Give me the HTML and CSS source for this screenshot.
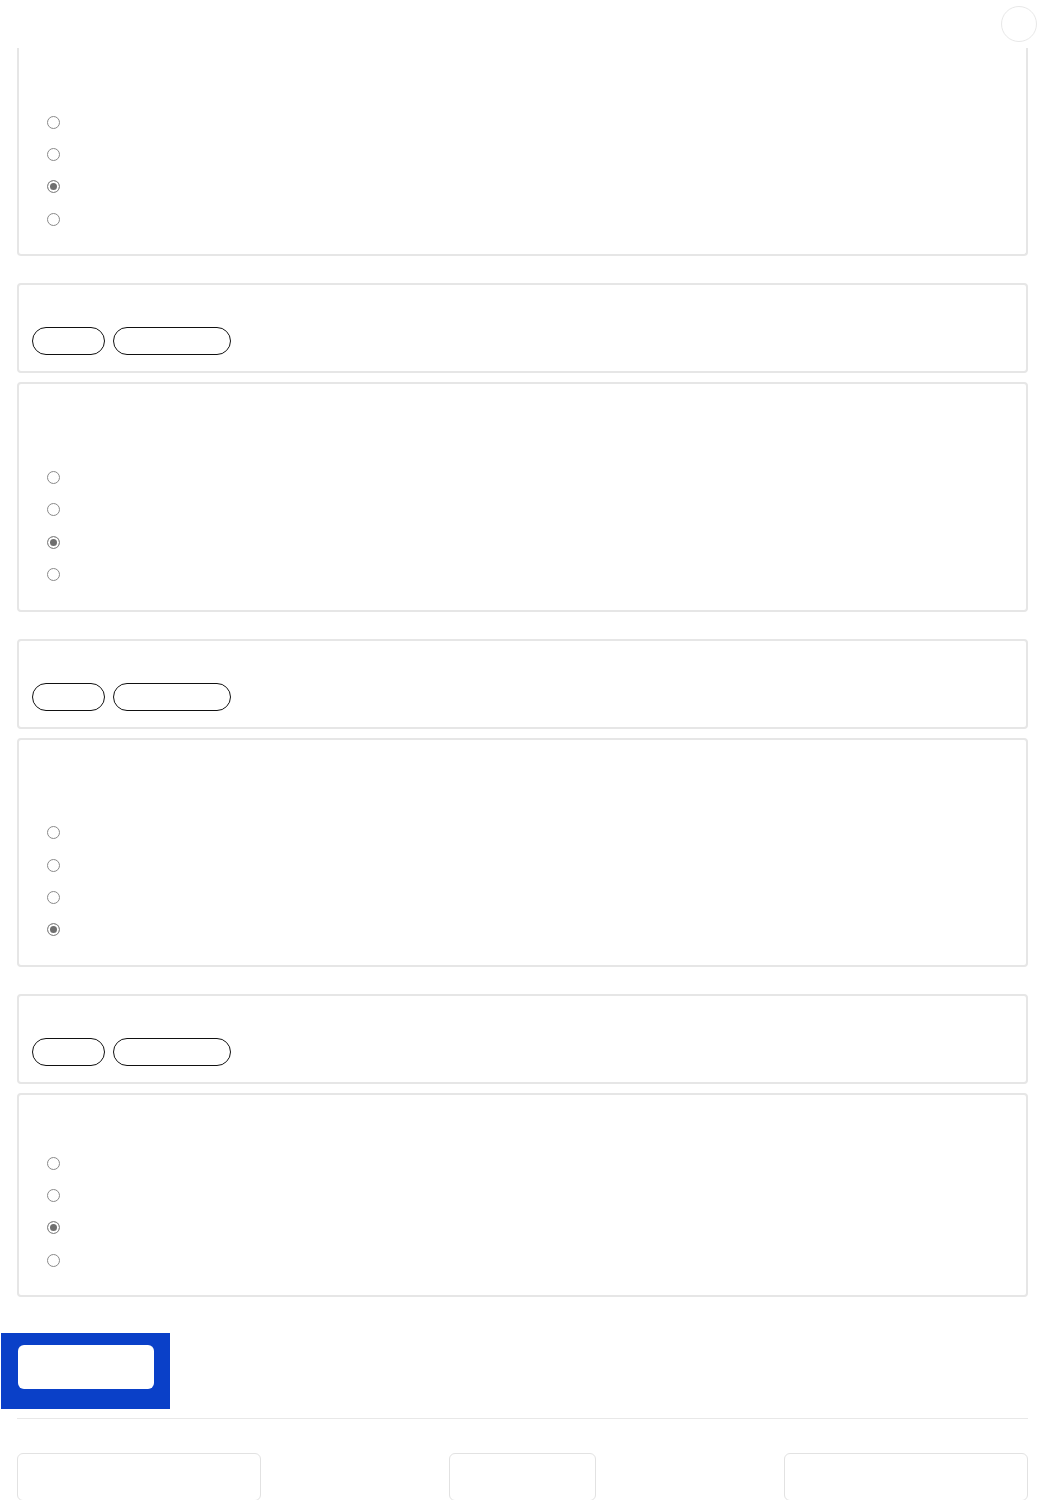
FILE: index.html
```html
<!DOCTYPE html>
<html lang="en">
<head>
    <meta charset="UTF-8">
    <meta name="viewport" content="width=device-width, initial-scale=1.0">
    <title>Quiz</title>
    <link rel="stylesheet" href="styles.css">
</head>
<body>
    <header class="topbar">
        <div class="avatar"></div>
    </header>

    <main class="quiz">
        <!-- question 1 (top cut off by the bar) -->
        <section class="card question first">
            <div class="q-text cut"></div>
            <div class="options">
                <label class="option"><input type="radio" name="q1" disabled></label>
                <label class="option"><input type="radio" name="q1" disabled></label>
                <label class="option"><input type="radio" name="q1" disabled checked></label>
                <label class="option"><input type="radio" name="q1" disabled></label>
            </div>
        </section>

        <section class="card tags">
            <div class="tag-title"></div>
            <div class="pills">
                <span class="pill short"></span>
                <span class="pill long"></span>
            </div>
        </section>
        <section class="card question">
            <div class="q-text two"></div>
            <div class="options">
                <label class="option"><input type="radio" name="q2" disabled></label>
                <label class="option"><input type="radio" name="q2" disabled></label>
                <label class="option"><input type="radio" name="q2" disabled checked></label>
                <label class="option"><input type="radio" name="q2" disabled></label>
            </div>
        </section>

        <section class="card tags">
            <div class="tag-title"></div>
            <div class="pills">
                <span class="pill short"></span>
                <span class="pill long"></span>
            </div>
        </section>
        <section class="card question">
            <div class="q-text two"></div>
            <div class="options">
                <label class="option"><input type="radio" name="q3" disabled></label>
                <label class="option"><input type="radio" name="q3" disabled></label>
                <label class="option"><input type="radio" name="q3" disabled></label>
                <label class="option"><input type="radio" name="q3" disabled checked></label>
            </div>
        </section>

        <section class="card tags">
            <div class="tag-title"></div>
            <div class="pills">
                <span class="pill short"></span>
                <span class="pill long"></span>
            </div>
        </section>
        <section class="card question">
            <div class="q-text one"></div>
            <div class="options">
                <label class="option"><input type="radio" name="q4" disabled></label>
                <label class="option"><input type="radio" name="q4" disabled></label>
                <label class="option"><input type="radio" name="q4" disabled checked></label>
                <label class="option"><input type="radio" name="q4" disabled></label>
            </div>
        </section>
    </main>

    <div class="submit-wrap">
        <button class="submit" type="button"></button>
    </div>

    <hr class="divider">

    <nav class="footer-nav">
        <button class="nav-btn wide" type="button"></button>
        <button class="nav-btn" type="button"></button>
        <button class="nav-btn wide" type="button"></button>
    </nav>
</body>
</html>
```

FILE: styles.css
```css
body, html {
    margin: 0;
    padding: 0;
    font-family: "Liberation Sans", Arial, sans-serif;
    background-color: #fff;
    color: #fff;
}

.topbar {
    height: 48px;
    display: flex;
    justify-content: flex-end;
    align-items: center;
    padding-right: 7px;
    box-sizing: border-box;
}

.avatar {
    width: 36px;
    height: 36px;
    border: 1px solid #e8e8e8;
    border-radius: 50%;
    box-sizing: border-box;
}

.quiz {
    padding: 0 16px 0 17px;
}

.card {
    border: 2px solid #e6e6e6;
    border-radius: 4px;
    background-color: #fff;
    box-sizing: border-box;
}

.card.first {
    border-top: none;
    border-top-left-radius: 0;
    border-top-right-radius: 0;
}

.question {
    padding: 16px 0 19px 28px;
    margin-bottom: 27px;
}

.q-text.cut {
    height: 42px;
}

.q-text.two {
    height: 61px;
}

.q-text.one {
    height: 36px;
}

.option {
    display: flex;
    align-items: center;
    height: 32.33px;
}

/* disabled radios, drawn by hand so the grey matches */
.option input {
    appearance: none;
    -webkit-appearance: none;
    margin: 0;
    width: 13px;
    height: 13px;
    border: 1px solid #8a8a8a;
    border-radius: 50%;
    background-color: #fff;
    box-sizing: border-box;
}

.option input:checked {
    background-color: #6f6f6f;
    box-shadow: inset 0 0 0 2px #fff;
    border-color: #8a8a8a;
}

.tags {
    padding: 16px 13px 16px 13px;
    margin-bottom: 9px;
}

.tag-title {
    height: 26px;
}

.pills {
    display: flex;
    gap: 8px;
}

.pill {
    display: block;
    height: 28px;
    border: 1px solid #111;
    border-radius: 14px;
    box-sizing: border-box;
}

.pill.short {
    width: 73px;
}

.pill.long {
    width: 118px;
}

.submit-wrap {
    width: fit-content;
    margin: 36px 0 0 1px;
    padding: 12px 16px 20px 17px;
    background-color: #0a40c8;
}

.submit {
    display: block;
    width: 136px;
    height: 44px;
    border: none;
    border-radius: 6px;
    background-color: #fff;
}

.divider {
    margin: 9px 16px 0 17px;
    border: none;
    border-top: 1px solid #e8e8e8;
}

.footer-nav {
    display: flex;
    justify-content: space-between;
    padding: 0 16px 0 17px;
    margin-top: 34px;
}

.nav-btn {
    width: 147px;
    height: 48px;
    border: 1px solid #e2e2e2;
    border-radius: 6px;
    background-color: #fff;
}

.nav-btn.wide {
    width: 244px;
}
```
